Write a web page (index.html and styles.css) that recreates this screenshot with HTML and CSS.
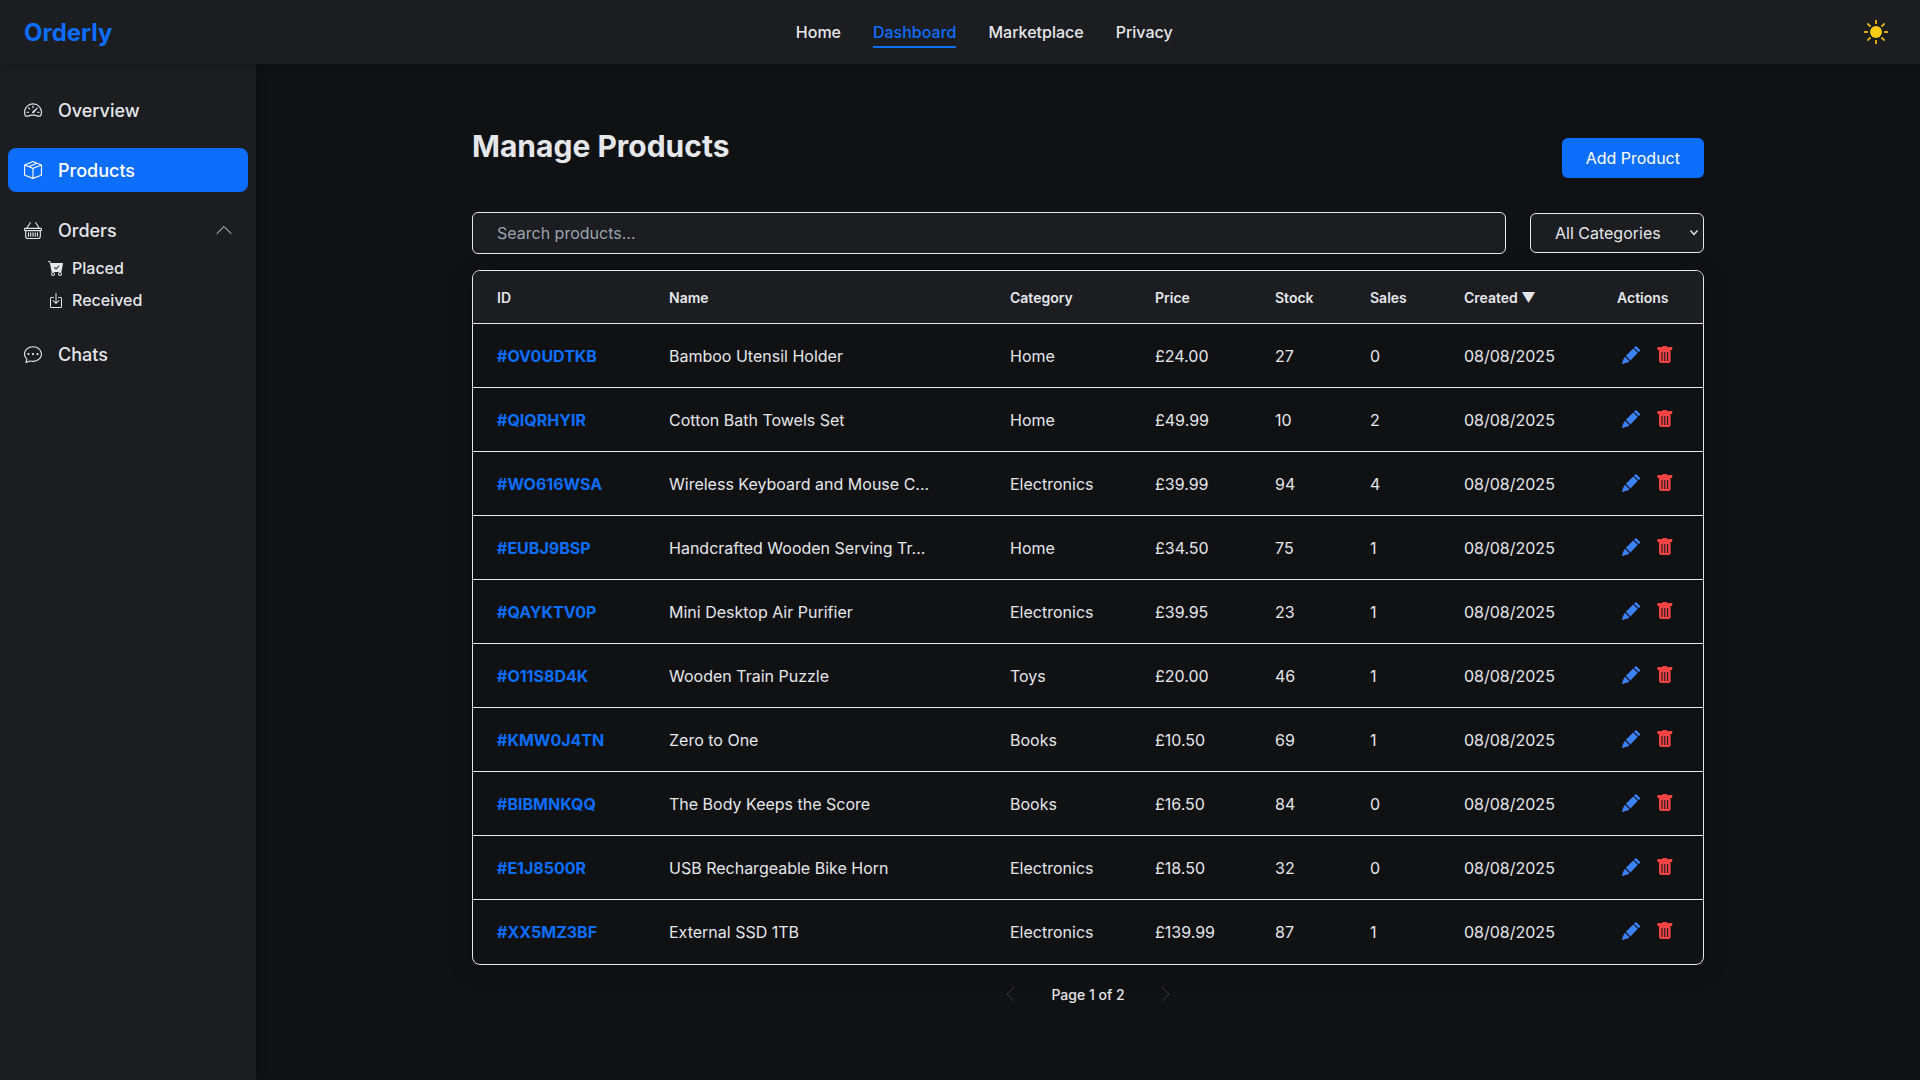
FILE: index.html
```html
<!DOCTYPE html>
<html lang="en">
<head>
<meta charset="utf-8">
<meta name="viewport" content="width=device-width, initial-scale=1">
<title>Orderly - Manage Products</title>
<link rel="stylesheet" href="styles.css">
</head>
<body>
<svg class="sprite" aria-hidden="true">
  <symbol id="pencil" viewBox="0 0 20 20">
    <path d="M13 1.700 14.200.500q.7-.7 1.400 0l3.200 3.200q.7.700 0 1.400L17.600 6.300zM12.200 2.600l4.500 4.500-7.300 7.300-4.600-4.600zM4 10.700l4.500 4.500-2 1.200L.7 18.300l1.900-5.600z"/>
  </symbol>
  <symbol id="trash" viewBox="0 0 20 20">
    <path fill-rule="evenodd" d="M3.100 1h4.100q.3-1 1-1h3.200q.7 0 1 1h4.100q.8 0 .8.800v2.200H2.300V1.800q0-.8.800-.8zM4 4h11.600v11q0 2-2 2H6q-2 0-2-2zM6.500 6v9h1V6zm2.800 0v9h1V6zm2.800 0v9h1V6z"/>
  </symbol>
</svg>

<header class="topbar">
  <a class="logo" href="#">Orderly</a>
  <nav class="topnav" aria-label="Main">
    <a href="#">Home</a>
    <a href="#" class="active">Dashboard</a>
    <a href="#">Marketplace</a>
    <a href="#">Privacy</a>
  </nav>
  <button class="theme" type="button" aria-label="Toggle theme">
    <svg width="24" height="24" viewBox="0 0 24 24"><g stroke="#d9ab14" stroke-width="2"><path d="M12 0v4M12 20v4M0 12h4M20 12h4M3.500 3.500l3 3M17.500 17.500l3 3M3.500 20.500l3-3M17.500 6.500l3-3"/></g><circle cx="12" cy="12" r="6" fill="#facc15"/></svg>
  </button>
</header>

<div class="layout">
  <aside class="sidebar">
    <a class="item" href="#">
      <svg width="18" height="18" viewBox="0 0 16 16" fill="currentColor"><path d="M8 4a.5.5 0 0 1 .5.5V6a.5.5 0 0 1-1 0V4.500A.5.5 0 0 1 8 4M3.732 5.732a.5.5 0 0 1 .707 0l.915.914a.5.5 0 1 1-.708.708l-.914-.915a.5.5 0 0 1 0-.707M2 10a.5.5 0 0 1 .5-.5h1.586a.5.5 0 0 1 0 1H2.500A.5.5 0 0 1 2 10m9.500 0a.5.5 0 0 1 .5-.5h1.500a.5.5 0 0 1 0 1H12a.5.5 0 0 1-.5-.5m.754-4.246a.39.39 0 0 0-.527-.02L7.547 9.310a.91.91 0 1 0 1.302 1.258l3.434-4.297a.39.39 0 0 0-.029-.518z"/><path fill-rule="evenodd" d="M0 10a8 8 0 1 1 15.547 2.661c-.442 1.253-1.845 1.602-2.932 1.250C11.309 13.488 9.475 13 8 13c-1.474 0-3.310.488-4.615.911-1.087.352-2.490.003-2.932-1.250A8 8 0 0 1 0 10m8-7a7 7 0 0 0-6.603 9.329c.203.575.923.876 1.680.630C4.397 12.533 6.358 12 8 12s3.604.532 4.923.960c.757.245 1.477-.056 1.680-.631A7 7 0 0 0 8 3"/></svg>
      Overview
    </a>
    <a class="item active" href="#" aria-current="page">
      <svg width="18" height="18" viewBox="0 0 16 16" fill="currentColor"><path d="M8.186 1.113a.5.5 0 0 0-.372 0L1.846 3.500l2.404.961L10.404 2zm3.564 1.426L5.596 5 8 5.961 14.154 3.500zm3.250 1.700-6.500 2.600v7.922l6.500-2.600V4.240zM7.500 14.762V6.838L1 4.239v7.923zM7.443.184a1.500 1.500 0 0 1 1.114 0l7.129 2.852A.5.5 0 0 1 16 3.500v8.662a1 1 0 0 1-.629.928l-7.185 2.874a.5.5 0 0 1-.372 0L.630 13.090a1 1 0 0 1-.630-.928V3.500a.5.5 0 0 1 .314-.464z"/></svg>
      Products
    </a>
    <div class="group">
      <button class="item" type="button" aria-expanded="true">
        <svg width="18" height="18" viewBox="0 0 16 16" fill="currentColor"><path d="M5.757 1.071a.5.5 0 0 1 .172.686L3.383 6h9.234L10.070 1.757a.5.5 0 1 1 .858-.514L13.783 6H15a1 1 0 0 1 1 1v1a1 1 0 0 1-1 1v4.500a2.500 2.500 0 0 1-2.500 2.500h-9A2.500 2.500 0 0 1 1 13.500V9a1 1 0 0 1-1-1V7a1 1 0 0 1 1-1h1.217L5.070 1.243a.5.5 0 0 1 .686-.172zM2 9v4.500A1.500 1.500 0 0 0 3.500 15h9a1.500 1.500 0 0 0 1.500-1.500V9zM1 7v1h14V7zm3 3a.5.5 0 0 1 .5.5v3a.5.5 0 0 1-1 0v-3A.5.5 0 0 1 4 10m2 0a.5.5 0 0 1 .5.5v3a.5.5 0 0 1-1 0v-3A.5.5 0 0 1 6 10m2 0a.5.5 0 0 1 .5.5v3a.5.5 0 0 1-1 0v-3A.5.5 0 0 1 8 10m2 0a.5.5 0 0 1 .5.5v3a.5.5 0 0 1-1 0v-3a.5.5 0 0 1 .5-.5m2 0a.5.5 0 0 1 .5.5v3a.5.5 0 0 1-1 0v-3a.5.5 0 0 1 .5-.5"/></svg>
        <span class="grow">Orders</span>
        <svg width="16" height="16" viewBox="0 0 16 16" fill="none" stroke="currentColor" stroke-linecap="round" stroke-linejoin="round"><path d="M1 11.500 8 4.500l7 7"/></svg>
      </button>
      <a class="subitem" href="#">
        <svg width="16" height="16" viewBox="0 0 16 16" fill="currentColor"><path d="M.5 1a.5.5 0 0 0 0 1h1.110l.401 1.607 1.498 7.985A.5.5 0 0 0 4 12h1a2 2 0 1 0 0 4 2 2 0 0 0 0-4h7a2 2 0 1 0 0 4 2 2 0 0 0 0-4h1a.5.5 0 0 0 .491-.408l1.500-8A.5.5 0 0 0 14.500 3H2.890l-.405-1.621A.5.5 0 0 0 2 1zM6 14a1 1 0 1 1-2 0 1 1 0 0 1 2 0m7 0a1 1 0 1 1-2 0 1 1 0 0 1 2 0m-1.646-7.646-3 3a.5.5 0 0 1-.708 0l-1.500-1.500a.5.5 0 1 1 .708-.708L8 8.293l2.646-2.647a.5.5 0 0 1 .708.708"/></svg>
        Placed
      </a>
      <a class="subitem" href="#">
        <svg width="16" height="16" viewBox="0 0 16 16" fill="currentColor"><path fill-rule="evenodd" d="M3.500 6a.5.5 0 0 0-.5.5v8a.5.5 0 0 0 .5.5h9a.5.5 0 0 0 .5-.5v-8a.5.5 0 0 0-.5-.5h-2a.5.5 0 0 1 0-1h2A1.500 1.500 0 0 1 14 6.500v8a1.500 1.500 0 0 1-1.500 1.500h-9A1.500 1.500 0 0 1 2 14.500v-8A1.500 1.500 0 0 1 3.500 5h2a.5.5 0 0 1 0 1z"/><path fill-rule="evenodd" d="M7.646 11.854a.5.5 0 0 0 .708 0l3-3a.5.5 0 0 0-.708-.708L8.500 10.293V1.500a.5.5 0 0 0-1 0v8.793L5.354 8.146a.5.5 0 1 0-.708.708z"/></svg>
        Received
      </a>
    </div>
    <a class="item" href="#">
      <svg width="18" height="18" viewBox="0 0 16 16" fill="currentColor"><path d="M5 8a1 1 0 1 1-2 0 1 1 0 0 1 2 0m4 0a1 1 0 1 1-2 0 1 1 0 0 1 2 0m3 1a1 1 0 1 0 0-2 1 1 0 0 0 0 2"/><path d="m2.165 15.803.020-.004c1.830-.363 2.948-.842 3.468-1.105A9 9 0 0 0 8 15c4.418 0 8-3.134 8-7s-3.582-7-8-7-8 3.134-8 7c0 1.760.743 3.370 1.970 4.600a10.400 10.400 0 0 1-.524 2.318l-.003.011a11 11 0 0 1-.244.637c-.079.186.074.394.273.362a22 22 0 0 0 .693-.125m.800-3.108a1 1 0 0 0-.287-.801C1.618 10.830 1 9.468 1 8c0-3.192 3.004-6 7-6s7 2.808 7 6-3.004 6-7 6a8 8 0 0 1-2.088-.272 1 1 0 0 0-.711.074c-.387.196-1.240.570-2.634.893a11 11 0 0 0 .398-2"/></svg>
      Chats
    </a>
  </aside>

  <main class="main">
    <div class="container">
      <div class="heading">
        <h1>Manage Products</h1>
        <button class="add" type="button">Add Product</button>
      </div>
      <div class="filters">
        <input class="search" type="text" placeholder="Search products..." aria-label="Search products">
        <select class="select" aria-label="Category"><option>All Categories</option><option>Books</option><option>Electronics</option><option>Home</option><option>Toys</option></select>
      </div>
      <div class="card">
        <table>
          <colgroup><col class="c-id"><col><col class="c-cat"><col class="c-price"><col class="c-stock"><col class="c-sales"><col class="c-date"><col class="c-act"></colgroup>
          <thead><tr><th>ID</th><th>Name</th><th>Category</th><th>Price</th><th>Stock</th><th>Sales</th><th>Created ▼</th><th>Actions</th></tr></thead>
          <tbody id="rows"></tbody>
        </table>
      </div>
      <div class="pager">
        <button type="button" disabled aria-label="Previous page"><svg width="16" height="16" viewBox="0 0 16 16" fill="none" stroke="currentColor" stroke-linecap="round" stroke-linejoin="round"><path d="M11 1 4 8l7 7"/></svg></button>
        <span>Page 1 of 2</span>
        <button type="button" disabled aria-label="Next page"><svg width="16" height="16" viewBox="0 0 16 16" fill="none" stroke="currentColor" stroke-linecap="round" stroke-linejoin="round"><path d="m5 1 7 7-7 7"/></svg></button>
      </div>
    </div>
  </main>
</div>
<script src="app.js"></script>
</body>
</html>
```
FILE: styles.css
```css
* { box-sizing: border-box; }
body {
  margin: 0;
  min-height: 100vh;
  display: flex;
  flex-direction: column;
  background: #101113;
  color: #e5e7eb;
  font: 16px/24px Inter, "Liberation Sans", sans-serif;
}
a { color: inherit; text-decoration: none; }
button, input, select { font: inherit; color: inherit; margin: 0; }
button { background: none; border: 0; padding: 0; cursor: pointer; }
svg { display: block; flex: none; }
.sprite { position: absolute; width: 0; height: 0; }

.topbar {
  position: relative;
  z-index: 1;
  display: flex;
  align-items: center;
  justify-content: space-between;
  height: 64px;
  padding: 0 24px;
  background: #1b1d21;
  box-shadow: 0 2px 8px rgba(0, 0, 0, .2);
}
.logo { color: #0d6efd; font-size: 24px; line-height: 35px; font-weight: 700; }
.topnav { display: flex; gap: 32px; font-weight: 500; }
.topnav a { padding: 4px 0 2px; border-bottom: 2px solid transparent; }
.topnav .active { color: #0d6efd; border-color: #0d6efd; }
.theme { padding: 8px; }

.layout { flex: 1; display: flex; }
.sidebar {
  flex: none;
  width: 256px;
  padding: 24px 8px;
  display: flex;
  flex-direction: column;
  gap: 16px;
  background: #1b1d21;
  box-shadow: 2px 0 8px rgba(0, 0, 0, .2);
}
.item {
  display: flex;
  align-items: center;
  gap: 16px;
  width: 100%;
  height: 44px;
  padding: 0 16px;
  border-radius: 8px;
  font-size: 18px;
  line-height: 27px;
  font-weight: 500;
  text-align: left;
}
.item.active { background: #0d6efd; color: #fff; }
.grow { flex: 1; }
.subitem {
  display: flex;
  align-items: center;
  gap: 8px;
  height: 32px;
  padding-left: 40px;
  font-weight: 500;
}

.main { flex: 1; min-width: 0; padding: 64px 24px; }
.container { max-width: 1232px; margin: 0 auto; }
.heading {
  display: flex;
  align-items: center;
  justify-content: space-between;
  margin-bottom: 24px;
}
h1 { margin: 0 0 24px; font-size: 30px; line-height: 36px; font-weight: 700; }
.add {
  height: 40px;
  padding: 0 24px;
  border-radius: 6px;
  background: #0d6efd;
  color: #fff;
}
.filters { display: flex; align-items: center; gap: 24px; margin-bottom: 16px; }
.search, .select {
  border: 1px solid #e5e7eb;
  border-radius: 6px;
  background-color: #1b1d21;
}
.search { flex: 1; min-width: 0; height: 42px; padding: 0 24px; }
.search::placeholder { color: #9ca3af; opacity: 1; }
.select {
  appearance: none;
  width: 174px;
  height: 40px;
  padding: 0 0 0 24px;
  background-image: url("data:image/svg+xml,%3Csvg xmlns='http://www.w3.org/2000/svg' width='10' height='8' fill='none' stroke='%23e5e7eb' stroke-width='1.4'%3E%3Cpath d='M1.500 1.500 5 5.500l3.500-4'/%3E%3C/svg%3E");
  background-repeat: no-repeat;
  background-position: right 4px center;
}

.card {
  border: 1px solid #e5e7eb;
  border-radius: 8px;
  overflow: hidden;
  box-shadow: 0 4px 24px rgba(0, 0, 0, .2);
}
table { width: 100%; table-layout: fixed; border-collapse: separate; border-spacing: 0; }
.c-id { width: 172px; }
.c-cat { width: 145px; }
.c-price { width: 120px; }
.c-stock { width: 95px; }
.c-sales { width: 94px; }
.c-date { width: 153px; }
.c-act { width: 110px; }
th, td { padding: 0 24px; text-align: left; white-space: nowrap; border-bottom: 1px solid #e5e7eb; }
th { height: 53px; background: #1b1d21; font-size: 14px; line-height: 21px; font-weight: 600; }
td { height: 64px; }
tbody tr:last-child td { border-bottom: 0; }
td:first-child { color: #0d6efd; font-weight: 700; }
th:last-child, td:last-child { padding-right: 0; }
.actions { display: flex; gap: 6px; }
.actions button { padding: 4px; }
.actions svg { width: 20px; height: 20px; fill: currentColor; }
.edit { color: #3b82f6; }
.delete { color: #ef4444; }

.pager {
  display: flex;
  justify-content: center;
  align-items: center;
  gap: 24px;
  margin-top: 16px;
  font-size: 14px;
  line-height: 21px;
  font-weight: 500;
}
.pager button { padding: 5px 8px; opacity: .2; }
```
FILE: app.js
```js
const products = [
  ["OV0UDTKB", "Bamboo Utensil Holder", "Home", "24.00", 27, 0],
  ["QIQRHYIR", "Cotton Bath Towels Set", "Home", "49.99", 10, 2],
  ["WO616WSA", "Wireless Keyboard and Mouse C...", "Electronics", "39.99", 94, 4],
  ["EUBJ9BSP", "Handcrafted Wooden Serving Tr...", "Home", "34.50", 75, 1],
  ["QAYKTV0P", "Mini Desktop Air Purifier", "Electronics", "39.95", 23, 1],
  ["O11S8D4K", "Wooden Train Puzzle", "Toys", "20.00", 46, 1],
  ["KMW0J4TN", "Zero to One", "Books", "10.50", 69, 1],
  ["BIBMNKQQ", "The Body Keeps the Score", "Books", "16.50", 84, 0],
  ["E1J8500R", "USB Rechargeable Bike Horn", "Electronics", "18.50", 32, 0],
  ["XX5MZ3BF", "External SSD 1TB", "Electronics", "139.99", 87, 1]
];
document.getElementById("rows").innerHTML = products.map(([id, name, category, price, stock, sales]) => `
  <tr><td>#${id}</td><td>${name}</td><td>${category}</td><td>£${price}</td><td>${stock}</td><td>${sales}</td><td>08/08/2025</td>
  <td><div class="actions">
    <button class="edit" type="button" aria-label="Edit ${name}"><svg><use href="#pencil"/></svg></button>
    <button class="delete" type="button" aria-label="Delete ${name}"><svg><use href="#trash"/></svg></button>
  </div></td></tr>`).join("");
```
